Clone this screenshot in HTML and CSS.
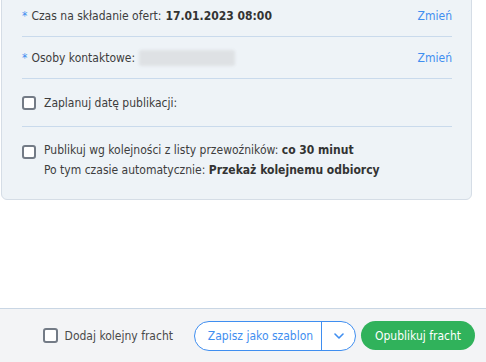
FILE: index.html
```html
<!DOCTYPE html>
<html lang="pl">
<head>
<meta charset="utf-8">
<link rel="stylesheet" href="styles.css">
</head>
<body>
<div class="page">
  <section class="card">
    <div class="row">
      <div class="label"><span class="req">*</span> Czas na składanie ofert: <b>17.01.2023 08:00</b></div>
      <a class="link">Zmień</a>
    </div>
    <div class="row">
      <div class="label"><span class="req">*</span> Osoby kontaktowe: <span class="blur"></span></div>
      <a class="link">Zmień</a>
    </div>
    <div class="row row-check">
      <label class="check"><span class="box"></span><span>Zaplanuj datę publikacji:</span></label>
    </div>
    <div class="row row-last">
      <label class="check check-top"><span class="box"></span>
        <span class="lines">
          <span class="line">Publikuj wg kolejności z listy przewoźników: <b>co 30 minut</b></span>
          <span class="line">Po tym czasie automatycznie: <b>Przekaż kolejnemu odbiorcy</b></span>
        </span>
      </label>
    </div>
  </section>
  <div class="spacer"></div>
  <footer class="footer">
    <label class="check foot-check"><span class="box box-lg"></span><span>Dodaj kolejny fracht</span></label>
    <div class="split">
      <button class="split-main">Zapisz jako szablon</button>
      <button class="split-arrow"><svg width="10" height="6" viewBox="0 0 10 6"><path d="M1 1l4 4 4-4" fill="none" stroke="#3f8ef0" stroke-width="1.6" stroke-linecap="round" stroke-linejoin="round"/></svg></button>
    </div>
    <button class="publish">Opublikuj fracht</button>
  </footer>
</div>
</body>
</html>
```
FILE: styles.css
```css
html,body{margin:0;padding:0;background:#fff}
body{font-family:"DejaVu Sans Condensed","DejaVu Sans",sans-serif;font-size:12px;color:#3d3d3d}
.page{height:362px;display:flex;flex-direction:column;overflow:hidden}
.card{
  box-sizing:border-box;width:471px;margin:-6px 0 0 1px;
  background:#eef3f7;border:1px solid #d5dde6;border-radius:6px;
  padding:0 19px 0 20px;flex:none;
}
.row{display:flex;align-items:center;justify-content:space-between;height:41px;border-bottom:1px solid #c9daec}
.row-check{height:47px}
.row-last{height:auto;border-bottom:none;padding:13px 0 19px;align-items:flex-start}
.label{white-space:nowrap;display:flex;align-items:center}
.label b{color:#333;margin-left:4px}
.req{color:#3f8ef0;margin-right:4px}
.link{color:#3f8ef0;cursor:pointer}
.blur{display:inline-block;width:96px;height:16px;margin-left:4px;background:#dee1e4;border-radius:3px;filter:blur(1.5px)}
.check{display:flex;align-items:center;gap:8px;cursor:pointer}
.check-top{align-items:flex-start}
.box{box-sizing:border-box;width:14px;height:14px;border:2px solid #737b86;border-radius:3px;background:#fff;flex:none}
.check-top .box{margin-top:5px}
.lines{display:flex;flex-direction:column}
.line{line-height:20px;white-space:nowrap}
.line b{color:#333}
.spacer{flex:1}
.footer{
  flex:none;height:54px;box-sizing:border-box;border-top:1px solid #c9d6e4;background:#f3f4f6;
  display:flex;align-items:center;justify-content:flex-end;padding:0 11px 0 0;
}
.foot-check{margin-right:21px;color:#4a4a4a;gap:7px}
.box-lg{width:15px;height:15px}
.split{display:flex;height:30px;box-sizing:border-box;border:1px solid #3f8ef0;border-radius:15px;background:#fff;overflow:hidden;margin-right:5px}
.split button{font:inherit;border:0;background:transparent;color:#3f8ef0;padding:0;cursor:pointer}
.split-main{width:127px;border-right:1px solid #3f8ef0 !important;padding-left:5px !important}
.split-arrow{width:33px;display:flex;align-items:center;justify-content:center}
.publish{height:29px;width:114px;border:0;border-radius:15px;background:#30b25b;color:#fff;font:inherit;cursor:pointer}
```
